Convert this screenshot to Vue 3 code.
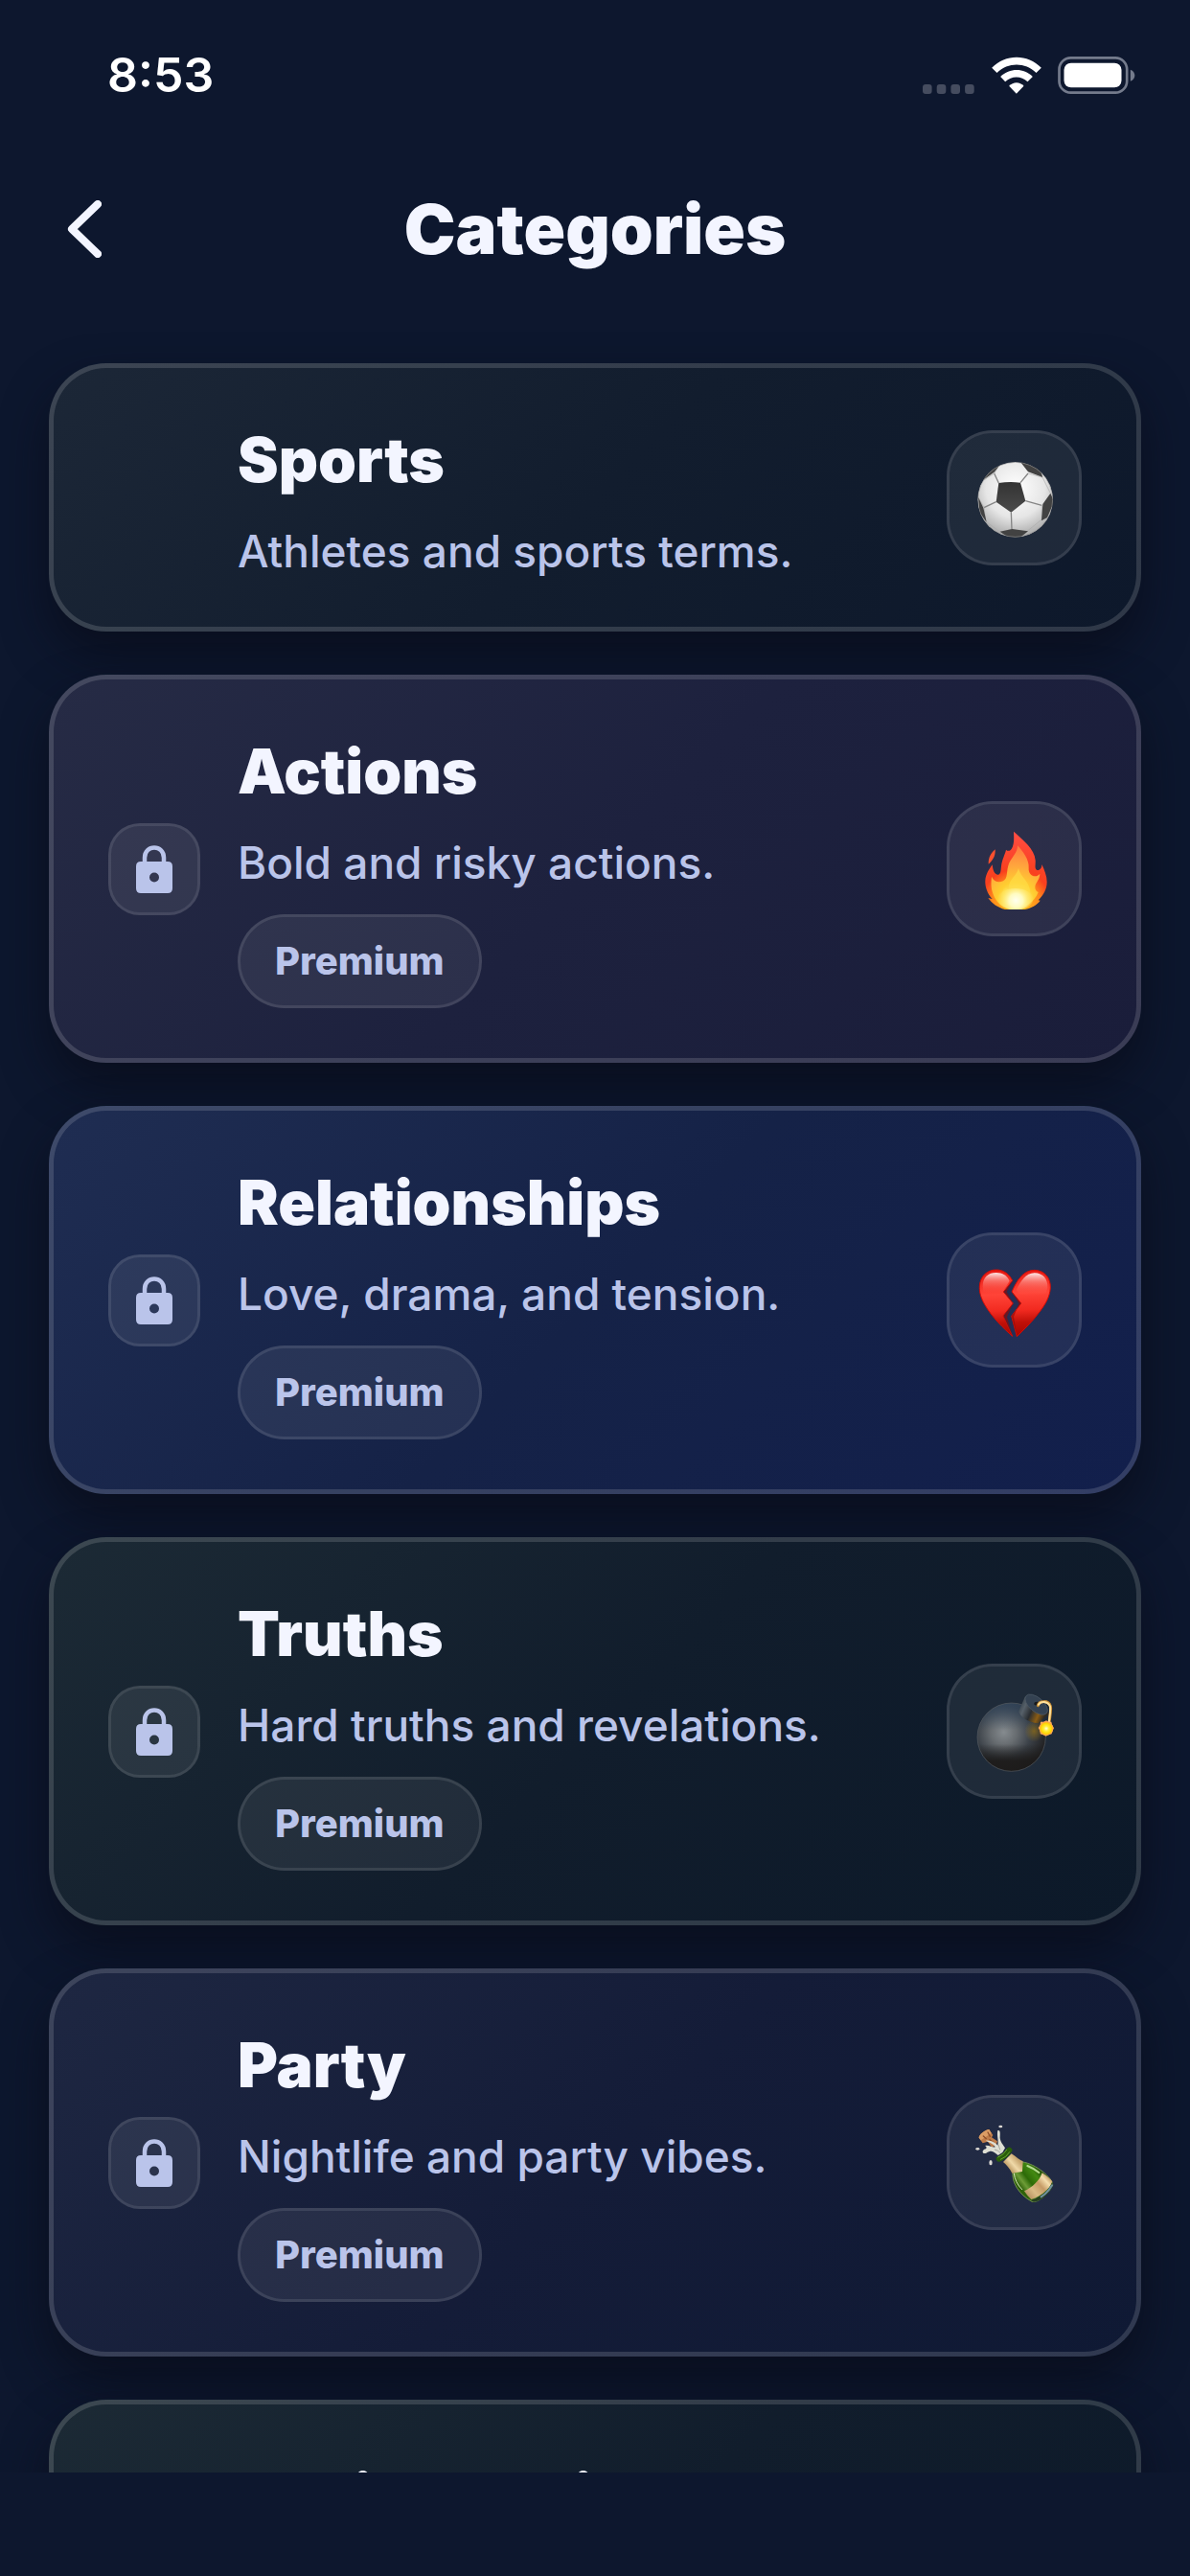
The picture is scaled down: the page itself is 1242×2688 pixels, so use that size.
<template>
    <div class="screen">
        <div class="statusBar">
            <span class="time">8:53</span>
            <div class="statusIcons">
                <svg class="signal" viewBox="0 0 54 10" aria-hidden="true">
                    <rect v-for="n in 4" :key="n" :x="(n - 1) * 14.7" y="0" width="9.6" height="10" rx="3" />
                </svg>
                <svg class="wifi" viewBox="284 55 155 117" aria-hidden="true">
                    <path d="M284 90C327 46 396 46 439 90L423 106C388 72 335 72 300 106Z" />
                    <path d="M311 118C340 90 384 90 412 118L396 134C376 115 346 115 326 134Z" />
                    <path d="M338 147C351 133 372 133 384 147L361 171Z" />
                </svg>
                <svg class="battery" viewBox="491 57 242 117" aria-hidden="true">
                    <rect x="495" y="61" width="212" height="109" rx="36" fill="none" stroke="#747b8c" stroke-width="8" />
                    <rect x="510" y="77" width="180" height="77" rx="22" fill="#fff" />
                    <path d="M718 98C736 104 736 128 718 134Z" fill="#747b8c" />
                </svg>
            </div>
        </div>

        <header class="header">
            <button class="back" type="button" aria-label="Back">
                <svg viewBox="0 0 36 60" aria-hidden="true">
                    <path d="M32 4L5 30L32 56" />
                </svg>
            </button>
            <h1>Categories</h1>
        </header>

        <main class="list">
            <button v-for="category in categories" :key="category.title" type="button" class="card" :class="category.theme">
                <span class="side">
                    <span v-if="category.premium" class="lockBox">
                        <svg viewBox="0 0 38 50" aria-hidden="true">
                            <path d="M9 19V13C9 -1 29 -1 29 13V19" fill="none" stroke="#bac4ea" stroke-width="4.5" />
                            <path fill-rule="evenodd" d="M5 17H33Q38 17 38 22V45Q38 50 33 50H5Q0 50 0 45V22Q0 17 5 17ZM19 28.5A5 5 0 1 0 19 38.5A5 5 0 1 0 19 28.5Z" fill="#bac4ea" />
                        </svg>
                    </span>
                </span>
                <span class="texts">
                    <span class="title">{{ category.title }}</span>
                    <span class="description">{{ category.description }}</span>
                    <span v-if="category.premium" class="badge">Premium</span>
                </span>
                <span class="tile">
                    <svg v-if="category.icon == 'ball'" viewBox="170 171 252 252" aria-hidden="true">
                        <defs>
                            <radialGradient id="ballWhite" cx="0.5" cy="0.35" r="0.65">
                                <stop offset="0" stop-color="#fff" />
                                <stop offset="0.6" stop-color="#e6e6e6" />
                                <stop offset="1" stop-color="#a9a9a9" />
                            </radialGradient>
                            <linearGradient id="ballBlack" x1="0" y1="0" x2="0" y2="1">
                                <stop offset="0" stop-color="#333" />
                                <stop offset="1" stop-color="#4b4b4b" />
                            </linearGradient>
                            <clipPath id="ballClip"><circle cx="298" cy="304" r="118" /></clipPath>
                        </defs>
                        <g clip-path="url(#ballClip)">
                            <circle cx="298" cy="304" r="118" fill="url(#ballWhite)" />
                            <g fill="none" stroke="#858585" stroke-width="4">
                                <path d="M246 252L232 222M314 251L338 222M330 308L381 322M285 344L287 397M238 311L200 329" />
                                <path d="M338 222L383 234L408 284M381 322V366L334 404M287 397L250 405L205 372L200 329L184 300M198 244L232 222L250 192" stroke-width="2" stroke="#aaa" />
                            </g>
                            <path d="M246 252Q280 247 314 251L330 308L285 344L238 311Z" fill="url(#ballBlack)" />
                            <path d="M314 186L338 217L384 234L372 198L340 180ZM252 193L232 218L196 244L212 206ZM408 284L384 318L380 370L398 360L420 310ZM250 404L288 396L338 403L310 425H280ZM182 296L198 330L208 374L186 344Z" fill="#424242" />
                            <circle cx="298" cy="304" r="117" fill="none" stroke="#8f8f8f" stroke-width="2" />
                        </g>
                    </svg>

                    <svg v-else-if="category.icon == 'fire'" viewBox="170 164 252 252" aria-hidden="true">
                        <defs>
                            <radialGradient id="fireOuter" gradientUnits="userSpaceOnUse" cx="300" cy="400" r="220">
                                <stop offset="0" stop-color="#ffd21a" />
                                <stop offset="0.34" stop-color="#ff8a1c" />
                                <stop offset="0.5" stop-color="#f9401e" />
                                <stop offset="1" stop-color="#ff4d42" />
                            </radialGradient>
                            <radialGradient id="fireInner" gradientUnits="userSpaceOnUse" cx="300" cy="390" r="170">
                                <stop offset="0" stop-color="#fff8a8" />
                                <stop offset="0.35" stop-color="#ffce30" />
                                <stop offset="0.65" stop-color="#ffa63d" />
                                <stop offset="1" stop-color="#ff7a3f" />
                            </radialGradient>
                            <radialGradient id="fireCore" gradientUnits="userSpaceOnUse" cx="300" cy="388" r="62">
                                <stop offset="0" stop-color="#fffff0" />
                                <stop offset="0.35" stop-color="#fffbc0" />
                                <stop offset="1" stop-color="#ffe03a" stop-opacity="0" />
                            </radialGradient>
                        </defs>
                        <path d="M293 172C322 198 358 226 361 262C362 277 357 288 366 293C376 294 381 286 381 275C389 292 397 311 397 330C397 352 387 371 370 387L376 388C360 411 323 420 293 420C259 419 229 404 213 380L226 383C209 365 203 343 204 326C205 306 216 290 226 276C228 294 233 307 244 307C253 306 252 296 254 281C256 260 266 244 269 229C273 234 281 234 286 227C295 214 294 192 293 172Z" fill="url(#fireOuter)" />
                        <path d="M235 228C236 243 232 259 214 274C213 254 222 239 235 228Z" fill="#f9502f" />
                        <path d="M305 216C322 234 342 260 340 286C339 302 348 311 360 312C367 312 371 308 375 304C374 325 362 330 360 344C359 354 364 360 370 362C356 395 328 414 296 416C264 415 242 397 232 376C220 350 222 331 224 313C231 329 245 334 260 327C276 319 269 295 278 272C288 251 305 239 305 216Z" fill="url(#fireInner)" />
                        <path d="M308 287C313 315 346 330 345 365C344 399 319 415 295 416C266 415 252 392 256 367C260 348 269 344 278 353C273 325 302 313 308 287Z" fill="#ffe04a" opacity="0.6" />
                        <ellipse cx="298" cy="384" rx="56" ry="34" fill="url(#fireCore)" />
                    </svg>

                    <svg v-else-if="category.icon == 'heart'" viewBox="170 164 252 252" aria-hidden="true">
                        <defs>
                            <linearGradient id="heartRed" gradientUnits="userSpaceOnUse" x1="290" y1="195" x2="300" y2="405">
                                <stop offset="0" stop-color="#e81912" />
                                <stop offset="0.35" stop-color="#ff4438" />
                                <stop offset="0.6" stop-color="#f22a20" />
                                <stop offset="0.78" stop-color="#c01008" />
                                <stop offset="1" stop-color="#a50500" />
                            </linearGradient>
                            <linearGradient id="heartShine" x1="0" y1="0" x2="0" y2="1">
                                <stop offset="0" stop-color="#fff" stop-opacity="0.9" />
                                <stop offset="0.4" stop-color="#ffb0a8" stop-opacity="0.5" />
                                <stop offset="1" stop-color="#ff5a4c" stop-opacity="0" />
                            </linearGradient>
                        </defs>
                        <g fill="url(#heartRed)" stroke="#d10d06" stroke-width="3" stroke-linejoin="round">
                            <path d="M289 228L261 263L291 299L260 338L289 402C262 378 224 342 202 303C190 281 185 265 186 245C188 214 210 194 238 194C260 194 279 206 289 228Z" />
                            <path d="M287 263C301 231 322 195 358 195C390 196 409 220 408 250C406 280 392 302 374 326C351 357 325 381 303 403L286 339L316 299Z" />
                        </g>
                        <path d="M288 230L263 263L291 299L262 338L289 402L272 342L291 299L271 263ZM287 263L316 299L287 338L303 403L293 341L309 300Z" fill="#900b08" opacity="0.65" />
                        <path d="M196 246C196 216 214 203 238 203C258 203 273 213 280 229L260 260Q228 276 198 262Z" fill="url(#heartShine)" />
                        <path d="M301 258C314 229 331 205 358 204C385 204 400 223 399 250L393 268Q350 282 310 270Z" fill="url(#heartShine)" />
                    </svg>

                    <svg v-else-if="category.icon == 'bomb'" viewBox="170 164 252 252" aria-hidden="true">
                        <defs>
                            <radialGradient id="bombBody" gradientUnits="userSpaceOnUse" cx="262" cy="292" r="130">
                                <stop offset="0" stop-color="#858b8f" />
                                <stop offset="0.3" stop-color="#686d71" />
                                <stop offset="0.65" stop-color="#3b4148" />
                                <stop offset="1" stop-color="#242426" />
                            </radialGradient>
                            <linearGradient id="bombShade" x1="0" y1="0" x2="0" y2="1">
                                <stop offset="0" stop-color="#2f4660" stop-opacity="0.7" />
                                <stop offset="0.4" stop-color="#2f4660" stop-opacity="0" />
                                <stop offset="0.6" stop-color="#1c1a19" stop-opacity="0" />
                                <stop offset="0.85" stop-color="#1c1a19" stop-opacity="0.9" />
                            </linearGradient>
                            <linearGradient id="bombNeck" x1="0" y1="0" x2="1" y2="0.4">
                                <stop offset="0" stop-color="#26313b" />
                                <stop offset="0.3" stop-color="#566069" />
                                <stop offset="0.55" stop-color="#292d31" />
                                <stop offset="0.8" stop-color="#8a5c14" />
                                <stop offset="1" stop-color="#302a22" />
                            </linearGradient>
                            <radialGradient id="spark">
                                <stop offset="0" stop-color="#fffde0" />
                                <stop offset="0.35" stop-color="#ffef3c" />
                                <stop offset="0.75" stop-color="#ffd400" />
                                <stop offset="1" stop-color="#ff9a5c" />
                            </radialGradient>
                            <radialGradient id="bombGlow">
                                <stop offset="0" stop-color="#a47a10" stop-opacity="0.6" />
                                <stop offset="1" stop-color="#a47a10" stop-opacity="0" />
                            </radialGradient>
                        </defs>
                        <circle cx="286" cy="307" r="107" fill="url(#bombBody)" />
                        <circle cx="286" cy="307" r="107" fill="url(#bombShade)" stroke="#555a60" stroke-width="2" />
                        <ellipse cx="357" cy="288" rx="30" ry="34" fill="url(#bombGlow)" />
                        <path d="M328 181L309 226C314 245 338 260 370 264L402 235C397 208 353 177 328 181Z" fill="url(#bombNeck)" />
                        <ellipse cx="364" cy="205" rx="42" ry="22" transform="rotate(40 364 205)" fill="#344252" stroke="#4f5c68" stroke-width="2" />
                        <ellipse cx="366" cy="202" rx="9" ry="6" fill="#17191c" />
                        <path d="M369 208C372 193 402 190 408 210C411 226 405 246 404 263" fill="none" stroke="#c58c35" stroke-width="9" stroke-linecap="round" />
                        <path d="M371 205C377 194 400 193 407 211C409 226 405 246 403 263" fill="none" stroke="#ffe09a" stroke-width="6" stroke-linecap="round" />
                        <path d="M395 255L402 259L411 259L413 268L419 279L414 287L412 297L402 300L394 304L385 300L376 297L376 287L370 278L376 269L377 259L387 259Z" fill="#ffae5a" />
                        <circle cx="395" cy="280" r="22" fill="url(#spark)" />
                    </svg>

                    <svg v-else-if="category.icon == 'bottle'" viewBox="170 164 252 252" aria-hidden="true">
                        <defs>
                            <linearGradient id="bottleGreen" gradientUnits="userSpaceOnUse" x1="302" y1="352" x2="372" y2="298">
                                <stop offset="0" stop-color="#2f6109" />
                                <stop offset="0.2" stop-color="#6d9c37" />
                                <stop offset="0.4" stop-color="#2d6a08" />
                                <stop offset="0.7" stop-color="#438a12" />
                                <stop offset="1" stop-color="#1c3f08" />
                            </linearGradient>
                            <linearGradient id="bottleLabel" gradientUnits="userSpaceOnUse" x1="335" y1="395" x2="402" y2="335">
                                <stop offset="0" stop-color="#b59060" />
                                <stop offset="0.3" stop-color="#d9bc86" />
                                <stop offset="0.6" stop-color="#c69b66" />
                                <stop offset="0.85" stop-color="#f5dfae" />
                                <stop offset="1" stop-color="#caa66c" />
                            </linearGradient>
                            <linearGradient id="foil" gradientUnits="userSpaceOnUse" x1="270" y1="302" x2="302" y2="274">
                                <stop offset="0" stop-color="#b7935c" />
                                <stop offset="0.5" stop-color="#f0d9a8" />
                                <stop offset="1" stop-color="#c6a56e" />
                            </linearGradient>
                        </defs>
                        <path d="M290 319C287 351 309 389 350 411C368 417 405 386 415 360C417 337 360 292 321 287Z" fill="url(#bottleGreen)" stroke="#71904f" stroke-width="3" />
                        <path d="M326 378C352 366 374 346 382 321Q404 335 414 348C406 373 374 397 348 404Q334 391 326 378Z" fill="url(#bottleLabel)" />
                        <path d="M348 406C373 399 405 375 415 350L415 363C404 389 371 416 352 411Z" fill="#25401f" />
                        <path d="M379 396Q399 384 413 360" fill="none" stroke="#7190a0" stroke-width="6" stroke-linecap="round" />
                        <path d="M294 323Q297 351 319 373" fill="none" stroke="#d7e8b9" stroke-width="3" stroke-linecap="round" />
                        <path d="M336 299Q356 307 372 320" fill="none" stroke="#b5dc8e" stroke-width="6" stroke-linecap="round" />
                        <path d="M260 287L286 261C302 272 312 281 322 285L320 317L288 322C280 306 270 296 260 287Z" fill="url(#foil)" />
                        <path d="M247 277Q267 269 279 250" fill="none" stroke="#285d09" stroke-width="18" stroke-linecap="round" />
                        <path d="M244 272Q262 265 271 249M252 279Q271 272 280 256" fill="none" stroke="#69a333" stroke-width="3" stroke-linecap="round" />
                        <path d="M184 211C184 201 204 186 216 185L228 203L224 210L242 222L238 234L224 241L212 223L196 228Z" fill="#bd7b49" />
                        <path d="M184 211C184 201 204 186 216 185L223 197L190 219Z" fill="#db9d65" />
                        <path d="M198 206L207 214M212 194L219 207M218 217L230 226" stroke="#8d4e29" stroke-width="4" stroke-linecap="round" />
                        <path d="M244 266C232 257 226 246 207 259C197 264 191 253 201 247C209 246 210 240 203 236C216 232 226 243 235 240C229 228 217 227 206 220C222 218 237 228 243 235C247 222 239 203 243 188C253 185 250 202 250 212C252 226 259 231 266 243L258 257Z" fill="#dedfd4" />
                        <path d="M234 248Q244 250 250 257M245 233L250 248" fill="none" stroke="#a7aaa0" stroke-width="3" stroke-linecap="round" />
                        <g fill="#dcd9d4">
                            <ellipse cx="252" cy="176" rx="6" ry="4" />
                            <ellipse cx="180" cy="246" rx="6" ry="4" />
                            <ellipse cx="221" cy="289" rx="5" ry="8" />
                        </g>
                    </svg>
                </span>
            </button>
        </main>
    </div>
</template>

<script setup>
    const categories = [
        { title: "Sports", description: "Athletes and sports terms.", icon: "ball", theme: "slate", premium: false },
        { title: "Actions", description: "Bold and risky actions.", icon: "fire", theme: "plum", premium: true },
        { title: "Relationships", description: "Love, drama, and tension.", icon: "heart", theme: "royal", premium: true },
        { title: "Truths", description: "Hard truths and revelations.", icon: "bomb", theme: "forest", premium: true },
        { title: "Party", description: "Nightlife and party vibes.", icon: "bottle", theme: "indigo", premium: true },
        { title: "Social Media", description: "", icon: "", theme: "forest", premium: true }
    ]
</script>

<style>
    body{
        background: #0d172e;
    }
</style>

<style scoped>
    .screen{
        display: flex;
        flex-direction: column;
        height: 100vh;
        padding-bottom: 108px;
        box-sizing: border-box;
        background: #0d172e;
        color: #f3f5ff;
        font-family: Inter, "Liberation Sans", sans-serif;
    }
    button{
        font: inherit;
        color: inherit;
        cursor: pointer;
    }
    svg{
        display: block;
    }
    .statusBar{
        display: flex;
        flex: none;
        justify-content: space-between;
        align-items: center;
        height: 132px;
        padding: 24px 57px 0 112px;
        box-sizing: border-box;
        color: white;
    }
    .time{
        font-size: 50px;
        font-weight: 600;
        line-height: 60px;
    }
    .statusIcons{
        display: flex;
        align-items: flex-end;
    }
    .signal{
        width: 54px;
        height: 10px;
        margin-right: 18px;
        fill: #454c5f;
    }
    .wifi{
        width: 52px;
        height: 39px;
        margin-right: 17px;
        fill: white;
    }
    .battery{
        width: 81px;
        height: 39px;
    }
    .header{
        display: grid;
        grid-template-columns: 100px 1fr 100px;
        flex: none;
        align-items: center;
        height: 214px;
        padding: 0 38px;
    }
    .back{
        display: flex;
        justify-content: center;
        padding: 20px 0;
        border: none;
        background: none;
    }
    .back svg{
        width: 36px;
        height: 60px;
        fill: none;
        stroke: #f3f5ff;
        stroke-width: 8;
        stroke-linecap: round;
        stroke-linejoin: round;
    }
    h1{
        margin: 0;
        font-size: 72px;
        font-weight: 900;
        line-height: 84px;
        text-align: center;
    }
    .list{
        display: flex;
        flex: 1;
        flex-direction: column;
        gap: 45px;
        min-height: 0;
        padding: 33px 51px;
        overflow-y: auto;
        scrollbar-width: none;
    }
    .card{
        display: flex;
        flex: none;
        align-items: center;
        gap: 39px;
        padding: 52px 57px;
        border: 5px solid rgba(255, 255, 255, 0.14);
        border-radius: 60px;
        background-origin: border-box;
        box-shadow: 0 24px 48px rgba(8, 12, 24, 0.7);
        text-align: left;
    }
    .slate{
        background-image: linear-gradient(135deg, #1c2737, #121d2e 50%, #0d182b);
    }
    .plum{
        background-image: linear-gradient(135deg, #262b45, #1d213e 50%, #1a1d3a);
    }
    .royal{
        background-image: linear-gradient(135deg, #1f2d52, #152247 50%, #121f4c);
    }
    .forest{
        background-image: linear-gradient(135deg, #1c2a35, #111d2c 50%, #0c1929);
    }
    .indigo{
        background-image: linear-gradient(135deg, #1e2742, #141c38 50%, #0f1934);
    }
    .side{
        flex: none;
        width: 96px;
    }
    .lockBox{
        display: flex;
        align-items: center;
        justify-content: center;
        height: 96px;
        box-sizing: border-box;
        border: 3px solid rgba(255, 255, 255, 0.16);
        border-radius: 33px;
        background: rgba(255, 255, 255, 0.08);
        background-clip: padding-box;
    }
    .lockBox svg{
        width: 38px;
        height: 50px;
    }
    .texts{
        display: flex;
        flex: 1;
        flex-direction: column;
        align-items: flex-start;
        min-width: 0;
    }
    .title{
        font-size: 64px;
        font-weight: 900;
        line-height: 88px;
    }
    .description{
        min-height: 54px;
        margin-top: 24px;
        color: #bac4ea;
        font-size: 46px;
        font-weight: 500;
        line-height: 54px;
    }
    .badge{
        margin-top: 27px;
        padding: 0 36px;
        border: 3px solid rgba(255, 255, 255, 0.16);
        border-radius: 49px;
        background: rgba(255, 255, 255, 0.07);
        background-clip: padding-box;
        color: #bac4ea;
        font-size: 40px;
        font-weight: 800;
        line-height: 92px;
    }
    .tile{
        display: flex;
        flex: none;
        align-items: center;
        justify-content: center;
        width: 141px;
        height: 141px;
        box-sizing: border-box;
        border: 3px solid rgba(255, 255, 255, 0.16);
        border-radius: 48px;
        background: rgba(255, 255, 255, 0.07);
        background-clip: padding-box;
    }
    .tile svg{
        width: 84px;
        height: 84px;
    }
</style>
